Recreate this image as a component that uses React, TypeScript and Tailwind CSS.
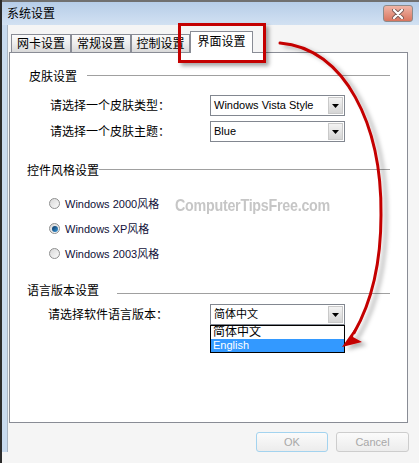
const Select = ({ value }: { value: string }) => (
  <div className="flex h-[21px] w-[135px] border border-[#828790] bg-white">
    <div className="flex-1 pl-[3px] text-[11px] leading-[19px] text-black">{value}</div>
    <div className="m-px flex w-[15px] items-center justify-center border border-[#c9c9c9] bg-gradient-to-b from-[#f3f3f3] to-[#d5d5d5]">
      <svg width="7" height="4" viewBox="0 0 7 4">
        <path d="M0 0h7L3.5 4z" fill="#000" />
      </svg>
    </div>
  </div>
);

const Radio = ({ checked, label }: { checked?: boolean; label: string }) => (
  <div className="flex h-[25px] items-center pl-[39px]">
    <div className="flex h-[11px] w-[11px] items-center justify-center rounded-full border border-[#8e8f8f] bg-gradient-to-br from-[#d8d8d8] to-[#fbfbfb]">
      {checked && (
        <div className="h-[6px] w-[6px] rounded-full bg-gradient-to-br from-[#0b3560] to-[#3c9de0]" />
      )}
    </div>
    <span className="ml-[5px] text-[11px] leading-[14px] text-[#101038]">{label}</span>
  </div>
);

const Tab = ({ label, w }: { label: string; w: string }) => (
  <div
    className={`flex h-[18px] items-center justify-center border border-b-0 border-[#898c95] bg-gradient-to-b from-[#fbfbfb] via-[#ededed] to-[#d9d9d9] text-[12px] ${w}`}
  >
    {label}
  </div>
);

export default function App() {
  return (
    <div className="relative h-[463px] w-[419px] overflow-hidden border-l-2 border-[#2b2b2b] bg-[#f5f5f5] font-['Liberation_Sans','Noto_Sans_CJK_SC',sans-serif] text-black">
      {/* title bar */}
      <div className="flex h-[25px] items-center border-t-2 border-[#707070] bg-gradient-to-b from-[#b6cde8] to-[#d2e1f2] pl-[5px]">
        <span className="text-[12px] leading-[14px]">系统设置</span>
        <div className="ml-auto mr-[6px] flex h-[17px] w-[30px] items-center justify-center rounded-[3px] border border-[#8b8b8b] bg-gradient-to-b from-[#efb4a6] to-[#d8755f]">
          <svg width="12" height="10" viewBox="0 0 12 10">
            <path d="M2 1l8 8M10 1l-8 8" stroke="#7a5a55" strokeWidth="4" strokeLinecap="round" />
            <path d="M2 1l8 8M10 1l-8 8" stroke="#fff" strokeWidth="2.2" strokeLinecap="round" />
          </svg>
        </div>
      </div>

      <div className="flex">
        {/* window frame */}
        <div className="w-[5px] self-stretch bg-[#c8daee]" />
        <div className="w-px self-stretch bg-[#aab6c4]" />

        <div className="ml-px flex flex-col">
          {/* tabs */}
          <div className="relative z-10 mt-[6px] flex items-end pl-[2px]">
            <Tab label="网卡设置" w="w-[60px]" />
            <Tab label="常规设置" w="w-[60px]" />
            <Tab label="控制设置" w="w-[59px]" />
            <div className="-mb-px flex h-[22px] w-[63px] items-center justify-center border border-b-0 border-[#898c95] bg-white pb-[2px] text-[12px]">
              界面设置
            </div>
          </div>

          {/* panel */}
          <div className="flex h-[371px] w-[399px] flex-col border border-[#898c95] bg-white text-[12px]">
            {/* 皮肤设置 */}
            <div className="mt-[16px] flex h-[16px] pl-[19px] leading-[16px]">
              <span>皮肤设置</span>
              <div className="ml-[10px] mr-[17px] mt-[6px] h-px flex-1 bg-[#a0a0a0]" />
            </div>
            <div className="mt-[10px] flex items-center pl-[40px]">
              <span className="w-[160px]">请选择一个皮肤类型：</span>
              <Select value="Windows Vista Style" />
            </div>
            <div className="mt-[5px] flex items-center pl-[40px]">
              <span className="w-[160px]">请选择一个皮肤主题：</span>
              <Select value="Blue" />
            </div>

            {/* 控件风格设置 */}
            <div className="mt-[21px] flex h-[16px] pl-[17px] leading-[16px]">
              <span>控件风格设置</span>
              <div className="mr-[17px] mt-[6px] h-px flex-1 bg-[#a0a0a0]" />
            </div>
            <div className="mt-[12px] flex flex-col">
              <Radio label="Windows 2000风格" />
              <Radio checked label="Windows XP风格" />
              <Radio label="Windows 2003风格" />
            </div>

            {/* 语言版本设置 */}
            <div className="mt-[17px] flex h-[16px] pl-[17px] leading-[16px]">
              <span>语言版本设置</span>
              <div className="ml-[18px] mr-[17px] mt-[10px] h-px flex-1 bg-[#a0a0a0]" />
            </div>
            <div className="mt-[5px] flex items-center pl-[38px]">
              <span className="w-[162px]">请选择软件语言版本：</span>
              <div className="relative">
                <Select value="简体中文" />
                <div className="absolute left-0 top-full z-20 flex h-[28px] w-[135px] flex-col border border-black bg-white">
                  <div className="h-[13px] pl-[2px] text-[12px] leading-[13px]">简体中文</div>
                  <div className="h-[13px] bg-[#3399ff] pl-[2px] text-[11px] leading-[13px] text-white">English</div>
                </div>
              </div>
            </div>
          </div>

          {/* buttons */}
          <div className="mt-[9px] flex justify-end gap-[8px]">
            <div className="flex h-[20px] w-[72px] items-center justify-center rounded-[3px] border border-[#a3d3ef] bg-gradient-to-b from-[#fbfbfb] to-[#ececec] text-[11px] text-[#a8a8a8]">
              OK
            </div>
            <div className="-mr-px flex h-[20px] w-[73px] items-center justify-center rounded-[3px] border border-[#cdcdcd] bg-gradient-to-b from-[#fbfbfb] to-[#ececec] text-[11px] text-[#a8a8a8]">
              Cancel
            </div>
          </div>
        </div>
      </div>

      {/* watermark */}
      <div className="absolute left-[173px] top-[196px] z-30 origin-left scale-x-[0.84] font-['Liberation_Sans',sans-serif] text-[17px] font-bold leading-[20px] tracking-[-0.3px] text-[#c6c6c6]">
        ComputerTipsFree.com
      </div>

      {/* red highlight box */}
      <div className="absolute left-[176px] top-[23px] z-30 h-[40px] w-[88px] border-[3px] border-[#c40000] shadow-[3px_3px_4px_rgba(0,0,0,0.35)]" />

      {/* red arrow */}
      <svg className="pointer-events-none absolute left-[-2px] top-0 z-30" width="419" height="463" viewBox="0 0 419 463">
        <defs>
          <filter id="sh" x="-20%" y="-20%" width="140%" height="140%">
            <feDropShadow dx="5" dy="3" stdDeviation="2" floodColor="#000" floodOpacity="0.3" />
          </filter>
        </defs>
        <g filter="url(#sh)">
          <path
            d="M280 43 C345 48 382 125 381 215 C381 265 370 305 354 333"
            fill="none"
            stroke="#c40000"
            strokeWidth="3"
            strokeLinecap="round"
          />
          <path d="M342 347 L356 327 L353 337 L362 342 Z" fill="#c40000" />
        </g>
      </svg>
    </div>
  );
}
